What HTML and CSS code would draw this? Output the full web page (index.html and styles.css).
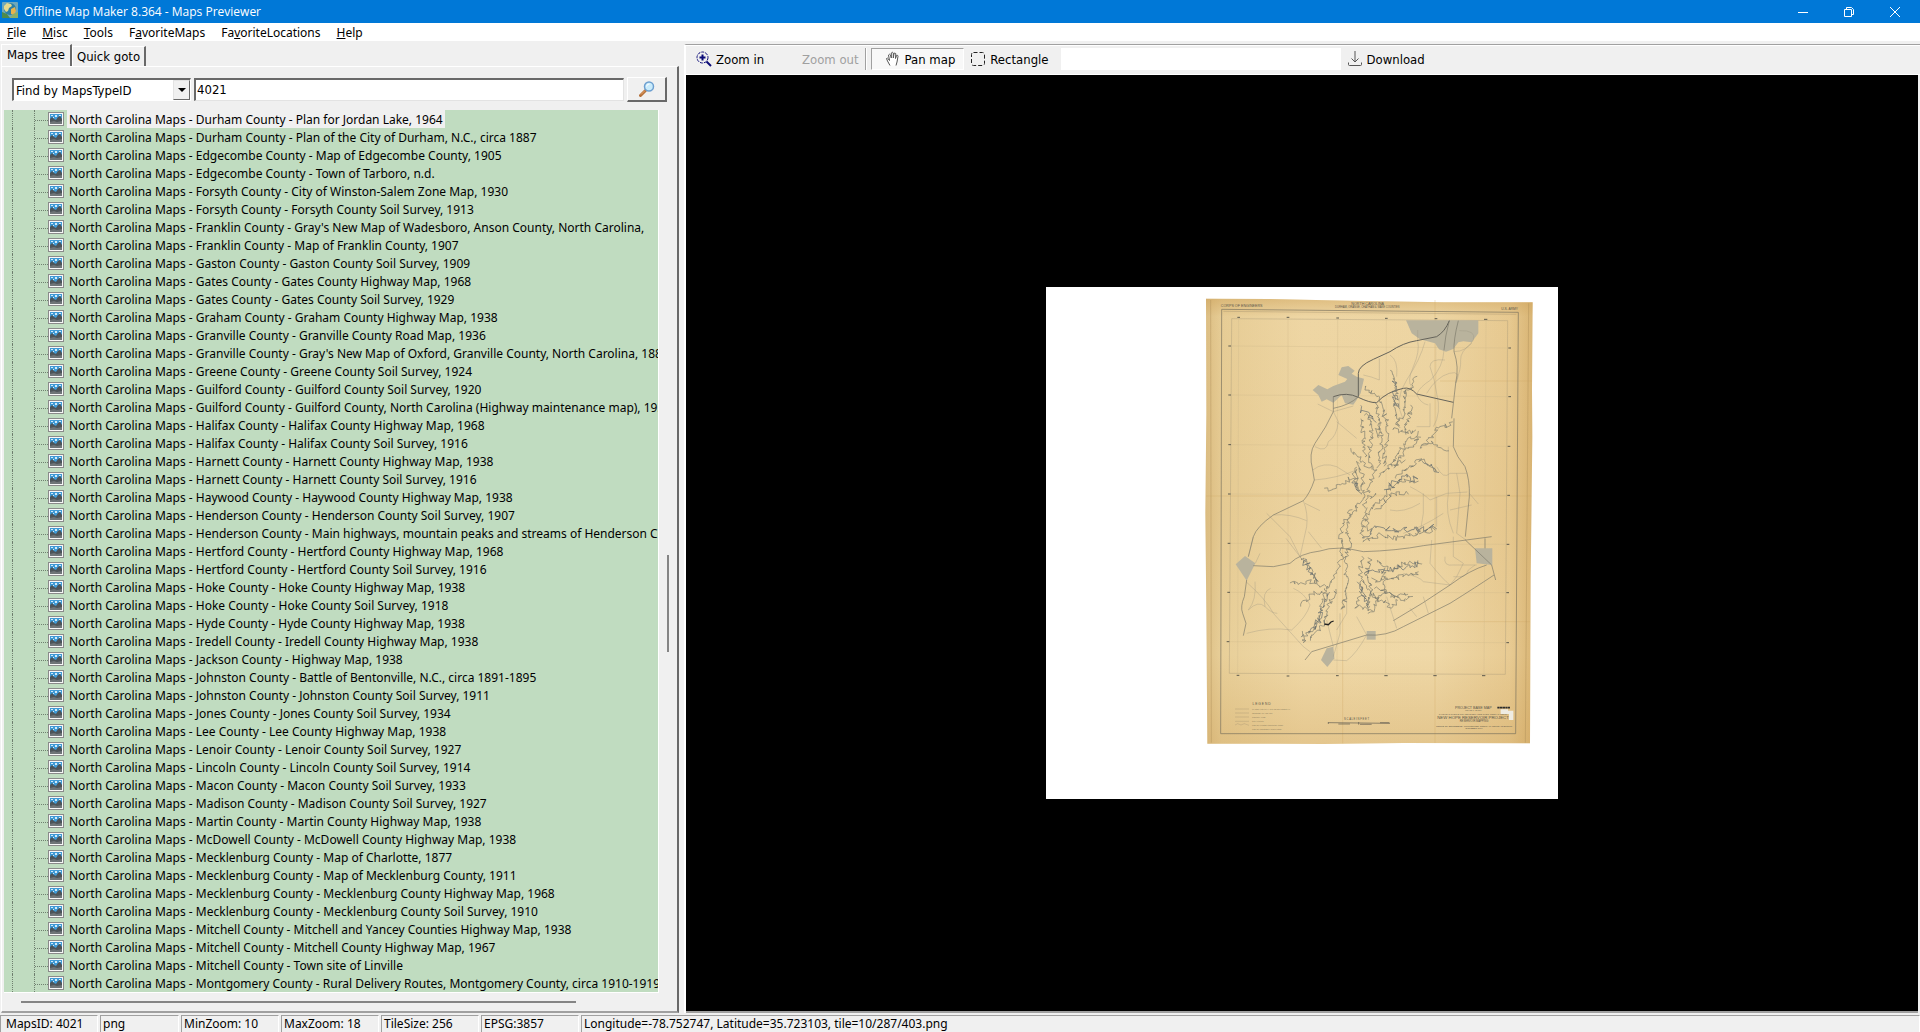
FILE: index.html
```html
<!DOCTYPE html>
<html lang="en">
<head>
    <meta charset="UTF-8">
    <meta name="viewport" content="width=device-width, initial-scale=1.0">
    <title>Offline Map Maker 8.364 - Maps Previewer</title>
    <link rel="stylesheet" href="styles.css">
</head>
<body>
    <svg class="symbols" aria-hidden="true">
        <symbol id="picture" viewBox="0 0 16 14">
            <rect x="0.5" y="0.5" width="15" height="13" fill="#f8f8f8" stroke="#8a8a8a"/>
            <rect x="2" y="2" width="12" height="10" fill="#3f9ad6"/>
            <path d="M3 3h2v1H3zM7 3h2v2H7zM11 3h2v1h-2zM5 5h1v1H5z" fill="#cfeafa"/>
            <path d="M2 12V7l2-2 2 2 2 1 2-3 2-1 2 3v5z" fill="#4c5459"/>
            <path d="M2 12v-2l4-1 3 1 5-1v3z" fill="#6f7578"/>
        </symbol>
    </svg>

    <header class="titlebar">
        <svg class="app-icon" viewBox="0 0 16 16">
            <rect width="16" height="16" rx="1" fill="#6fa8bb"/>
            <circle cx="8" cy="7" r="6" fill="#2c7fa6"/>
            <path d="M2 4l3-3 4 1 1 2-3 2-1 3-2 1-2-3z" fill="#e6d98c"/>
            <path d="M9 7l4-2 1 4-2 4-3-1z" fill="#e9b44c"/>
            <path d="M0 10l5 2 3 4H0z" fill="#4f8a4b"/>
            <path d="M8 16l3-4 5-2v6z" fill="#8bb06a"/>
        </svg>
        <h1>Offline Map Maker 8.364 - Maps Previewer</h1>
        <div class="window-buttons">
            <button aria-label="Minimize"><svg viewBox="0 0 12 12"><path d="M1 6.5h10"/></svg></button>
            <button aria-label="Restore"><svg viewBox="0 0 12 12"><path d="M1.500 3.500h7v7h-7zM3.500 3V1.500h5l2 2v5H9"/></svg></button>
            <button aria-label="Close"><svg viewBox="0 0 12 12"><path d="M1 1l10 10M11 1L1 11"/></svg></button>
        </div>
    </header>

    <nav class="menubar">
        <a href="#"><u>F</u>ile</a>
        <a href="#"><u>M</u>isc</a>
        <a href="#"><u>T</u>ools</a>
        <a href="#">F<u>a</u>voriteMaps</a>
        <a href="#">Fa<u>v</u>oriteLocations</a>
        <a href="#"><u>H</u>elp</a>
    </nav>

    <main class="workspace">
        <section class="sidebar">
            <div class="tabs">
                <button class="tab active">Maps tree</button>
                <button class="tab">Quick goto</button>
            </div>
            <div class="panel">
                <form class="search">
                    <div class="combo">
                        <select aria-label="Search mode">
                            <option>Find by MapsTypeID</option>
                            <option>Find by name</option>
                        </select>
                        <span class="arrow"></span>
                    </div>
                    <input type="text" value="4021" aria-label="Search text">
                    <button type="button" aria-label="Find">
                        <svg viewBox="0 0 16 16">
                            <path d="M1.500 14.500l5-5" stroke="#b5713a" stroke-width="3" stroke-linecap="round"/>
                            <path d="M2 13.500l4-4" stroke="#e9a468"/>
                            <circle cx="10" cy="5.500" r="4.500" fill="#c9ebfb" stroke="#6c9fd0" stroke-width="1.500"/>
                            <path d="M7.500 5.500a3 3 0 0 1 3-2.500" stroke="#fff" fill="none"/>
                        </svg>
                    </button>
                </form>
                <div class="tree-area">
                    <ul class="tree" id="tree"></ul>
                    <div class="scroll-y"><span></span></div>
                    <div class="scroll-x"><span></span></div>
                </div>
            </div>
        </section>

        <section class="viewer">
            <div class="toolbar">
                <button class="tool zoom-in">
                    <svg viewBox="0 0 16 16" fill="none" stroke="#0a0a78">
                        <circle cx="6.500" cy="6.500" r="5.500" stroke-dasharray="3 1"/>
                        <path d="M6.500 3.500v6M3.500 6.500h6" stroke-width="2"/>
                        <path d="M10.500 10.500l4.500 4.500" stroke-width="2"/>
                    </svg>
                    Zoom in
                </button>
                <button class="tool zoom-out" disabled>Zoom out</button>
                <span class="divider"></span>
                <button class="tool pan pressed">
                    <svg viewBox="0 0 16 16" fill="#fff" stroke="#555">
                        <path d="M5 14.500L2.500 10 1.500 7.500q1-1 2 .5l1 1.500-1-5.500q1-1.500 2 0l.8 3V2q1-1.500 2 0v5l.7-4.500q1-1.200 1.800.2L10.500 7.500l1-3q1.500-.8 1.500.8L12 11l-1 3.500"/>
                    </svg>
                    Pan map
                </button>
                <button class="tool rect">
                    <svg viewBox="0 0 16 16" fill="none" stroke="#222">
                        <rect x="1.500" y="1.500" width="13" height="13" rx="2" stroke-dasharray="4 2"/>
                    </svg>
                    Rectangle
                </button>
                <input type="text" aria-label="Selected area">
                <button class="tool download">
                    <svg viewBox="0 0 16 16" fill="none" stroke="#555">
                        <path d="M8 0v11M4.500 7.500L8 11l3.500-3.500M1.500 11.500v2q0 1 1 1h11q1 0 1-1v-2"/>
                    </svg>
                    Download
                </button>
            </div>
            <div class="canvas">
                <svg class="tile" viewBox="-432 21 1536 1536">
                    <defs>
                        <linearGradient id="paper" x1="0" x2="1" y1="0" y2="0">
                            <stop offset="0" stop-color="#ddbf85"/>
                            <stop offset="0.05" stop-color="#e8cf99"/>
                            <stop offset="0.3" stop-color="#f0d9a8"/>
                            <stop offset="0.7" stop-color="#efd8a7"/>
                            <stop offset="0.93" stop-color="#e8cb93"/>
                            <stop offset="1" stop-color="#dab676"/>
                        </linearGradient>
                        <linearGradient id="shade" x1="0" x2="0" y1="0" y2="1">
                            <stop offset="0" stop-color="#c99b50" stop-opacity="0.45"/>
                            <stop offset="0.04" stop-color="#c99b50" stop-opacity="0.05"/>
                            <stop offset="0.48" stop-color="#c99b50" stop-opacity="0.1"/>
                            <stop offset="0.8" stop-color="#c99b50" stop-opacity="0"/>
                            <stop offset="1" stop-color="#c99b50" stop-opacity="0.3"/>
                        </linearGradient>
                    </defs>
                    <rect x="-432" y="21" width="1536" height="1536" fill="#fff"/>
                    <path d="M48 56L240 57 480 62 760 67 1028 67 1026 330 1027 470 1022 900 1020 1390 640 1389 400 1392 250 1391 52 1391 49 1000 46 700 49 400z" fill="url(#paper)"/>
                    <path d="M48 56L240 57 480 62 760 67 1028 67 1026 330 1027 470 1022 900 1020 1390 640 1389 400 1392 250 1391 52 1391 49 1000 46 700 49 400z" fill="url(#shade)"/>
                    <path d="M735 60V1389M48 648H1024M750 303H1026M735 1025H1020M458 800V1390" stroke="#cfa763" stroke-width="3" opacity="0.3"/>
                    <path d="M62 60L64 1388M1016 70L1006 1388" stroke="#a98a55" stroke-width="2" fill="none" opacity="0.6"/>

                    <!-- sheet frame and graticule -->
                    <g fill="none">
                        <path d="M95 88L985 97 977 1361 92 1361z" stroke="#77705c" stroke-width="2"/>
                        <path d="M100 94L979 103" stroke="#98896a"/>
                        <path d="M125 116L953 122 946 1183 118 1180z" stroke="#9c9073" stroke-width="1"/>
                        <path d="M146 118L143 1180M294 118V1180M443 118L441 1180M589 120L587 1182M738 121L735 1182M888 122L882 1182M122 198L952 204M121 345L951 350M120 494L950 499M119 642L949 646M118 790L949 793M118 937L948 938M118 1085L947 1088" stroke="#cdb88c" stroke-width="1"/>
                    </g>
                    <g stroke="#5d5a4e" stroke-width="3">
                        <path d="M142 112h8M290 112h8M439 114h8M585 115h8M734 116h8M882 118h10M140 1186h8M290 1188h8M438 1187h8M583 1187h10M730 1187h10M876 1187h10M115 198h8M115 345h8M115 494h8M114 642h8M113 790h8M112 937h8M110 1085h8M955 204h8M955 350h8M953 499h8M952 646h8M950 793h8M949 938h8M949 1088h8"/>
                    </g>

                    <!-- towns -->
                    <g fill="#b9b39d">
                        <path d="M648 121H865V160L845 187 820 184 805 187 790 207 768 215 747 208 735 190 690 178 665 160z"/>
                        <path d="M455 262L475 258 494 272 485 281 500 290 522 296 512 340 500 360 490 374 465 370 455 345 430 368 410 358 395 365 385 345 368 330 385 315 412 328 430 318 465 305 472 297 445 285z"/>
                        <path d="M137 853L165 828 196 850 170 902z"/>
                        <path d="M855 805H907V855L860 850z"/>
                        <path d="M530 1053h27v26h-27z"/>
                        <path d="M393 1140L410 1105 430 1100 433 1135 412 1161z"/>
                    </g>

                    <!-- minor roads -->
                    <g fill="none" stroke="#99937f" stroke-width="1">
                        <path d="M683 150V182Q690 215 670 260T665 320M705 185Q690 240 650 300T640 420M762 210Q760 260 722 300 690 320 680 342M765 240Q720 235 720 260 735 300 740 340 755 400 730 440M710 340Q740 290 778 280T797 310M792 215Q830 215 850 180 860 150 808 152M845 190Q810 215 812 240T797 310"/>
                        <path d="M568 235V300Q545 290 520 285M600 225Q625 240 620 290M720 370V440H680M715 375Q690 370 680 342M383 372L430 395 490 378M430 395L445 425Q440 470 415 485 410 520 375 500M440 425L500 475M368 570Q400 545 440 560L480 585M373 600Q440 595 500 570"/>
                        <path d="M340 662Q355 700 350 740L330 830M250 705Q300 700 350 722M230 700L300 770 330 830M288 775L330 830M345 670L390 692M355 755L395 805M660 620Q700 640 720 660L770 640 832 636M740 560Q760 600 780 580H832M700 640V700L690 760M740 650V740M775 500V640Q765 700 790 760M780 690L845 675M600 690Q640 700 690 670M640 760Q700 740 760 700M800 580L810 640 800 760 828 780M838 640L865 672"/>
                        <path d="M190 770L175 830M196 850L210 820M168 905Q230 960 250 1000L340 1100 360 1115M195 905Q200 960 175 990M175 990Q205 960 225 980 245 1000 262 1000M170 1060Q240 1040 305 1050 350 1010 360 975 345 940 310 925M225 980Q215 935 242 925"/>
                        <path d="M410 1020L430 1100M450 1000V1060L430 1130M530 1065Q500 1120 470 1142L430 1140M500 1010L530 1065M470 940V1000L440 1050M590 950L620 1045M700 950L715 1000M725 780L720 850Q760 900 780 915M790 770V830L820 850 800 890 780 915M765 830Q760 860 790 855H860M855 855L835 870Q830 895 790 890M640 880Q690 890 700 905L780 915M660 985L680 1010"/>
                    </g>

                    <!-- highways -->
                    <g fill="none" stroke="#7c7969" stroke-width="2">
                        <path d="M778 122Q765 155 740 170L680 182Q640 188 600 215L550 238Q505 258 505 280V350M430 350Q470 335 505 352T560 368Q590 335 640 325 660 320 680 342L790 367" stroke="#66645b" stroke-width="3"/>
                        <path d="M430 350V395M505 350Q480 375 430 385M762 210Q765 170 778 122"/>
                        <path d="M805 122Q790 180 792 215 808 260 797 310L785 415M792 415L790 500Q800 530 825 560 840 600 838 650L826 770"/>
                        <path d="M430 395Q410 440 375 490 355 520 368 570L373 600Q360 640 340 662L250 705Q200 740 190 770L175 830M170 900L163 950Q150 980 158 1000L168 1030 160 1067"/>
                        <path d="M190 857L250 860 300 850Q330 820 390 813 440 795 520 815 620 812 700 797L905 770M885 775V805"/>
                        <path d="M345 1140L365 1115 530 1065Q590 1070 640 1040L780 970Q860 920 912 885M826 780L905 855 917 900M610 1022Q700 970 780 915 840 870 890 855"/>
                    </g>

                    <!-- reservoir shoreline, roughened by the script below -->
                    <g class="shore" fill="none" stroke="#7b7b6e" stroke-width="2" data-rough="6">
                        <path d="M530 400Q550 440 540 500T555 570L530 640 500 680"/>
                        <path d="M520 410Q515 480 525 530"/>
                        <path d="M480 510L545 570"/>
                        <path d="M505 545L520 600 515 645"/>
                        <path d="M410 632L490 590 495 560"/>
                        <path d="M495 570L505 640"/>
                        <path d="M520 320Q540 340 555 340L575 385 595 440 590 500 580 560"/>
                        <path d="M560 370L565 430 560 470"/>
                        <path d="M605 270L620 330 615 400 625 440"/>
                        <path d="M645 330L640 400 620 440"/>
                        <path d="M680 290L655 330 645 350"/>
                        <path d="M665 380L650 430 640 460"/>
                        <path d="M610 440L640 460 680 455"/>
                        <path d="M680 460L620 520 600 560"/>
                        <path d="M690 470L640 520 610 570"/>
                        <path d="M790 430L740 450 700 500"/>
                        <path d="M770 510L720 485 690 510"/>
                        <path d="M740 570L690 540 650 570 610 590"/>
                        <path d="M680 610L630 600 590 640 550 680"/>
                        <path d="M650 640L610 640 560 690"/>
                        <path d="M500 680L465 720 450 780 455 830 440 880 410 930"/>
                        <path d="M480 690L470 740 480 800 465 840 470 900 460 990"/>
                        <path d="M530 690L520 730 515 770"/>
                        <path d="M545 680L530 720 540 760"/>
                        <path d="M520 780L570 765 620 775 700 760 740 745"/>
                        <path d="M520 830L510 880 515 930 500 980 550 990"/>
                        <path d="M540 830L530 880 545 930 530 980"/>
                        <path d="M560 840L600 870 640 850 700 845"/>
                        <path d="M550 900L620 895 690 875"/>
                        <path d="M560 920L620 950 660 940"/>
                        <path d="M540 940L600 980 625 960"/>
                        <path d="M520 900L560 960 540 1000"/>
                        <path d="M330 830L365 870 385 910 410 930"/>
                        <path d="M305 910L365 905 385 910"/>
                        <path d="M330 975L370 940 410 940"/>
                        <path d="M410 930L395 980 385 1030 345 1075"/>
                        <path d="M440 930L415 980 400 1030 360 1080"/>
                        <path d="M330 1055L350 1095"/>
                        <path d="M570 430L575 500 565 560"/>
                        <path d="M565 590L600 560 640 540"/>
                        <path d="M560 640L530 660 520 690"/>
                        <path d="M580 870L590 930 560 960"/>
                        <path d="M600 950L640 960 665 940"/>
                    </g>
                    <g class="shore" fill="none" stroke="#646b6c" stroke-width="2" data-rough="8">
                        <path d="M510 385L540 400 550 430"/>
                        <path d="M520 770L560 740 600 750 640 745 680 750 740 740"/>
                        <path d="M530 880L600 870 690 850"/>
                        <path d="M510 910L545 990"/>
                        <path d="M340 835L380 900"/>
                        <path d="M410 940L390 1010 360 1060"/>
                        <path d="M610 300L620 390"/>
                        <path d="M590 630L640 590 680 600"/>
                        <path d="M490 600L510 640"/>
                        <path d="M700 550L740 575"/>
                    </g>
                    <path d="M403 1032l12 2 8-8 8-3" stroke="#222" stroke-width="4" fill="none"/>

                    <!-- lettering -->
                    <g class="map-text">
                        <text x="155" y="81" font-size="11">CORPS OF ENGINEERS</text>
                        <text x="533" y="74" font-size="11">NORTH CAROLINA</text>
                        <text x="532" y="84" font-size="8">DURHAM, ORANGE, CHATHAM &amp; WAKE COUNTIES</text>
                        <text x="959" y="91" font-size="10">U.S. ARMY</text>
                        <text x="215" y="1274" font-size="10">L E G E N D</text>
                        <text x="850" y="1286" font-size="11">PROJECT BASE MAP</text>
                        <text x="850" y="1294" font-size="6">SCALE 1 : 80,000</text>
                        <text x="850" y="1305" font-size="6">CAPE FEAR RIVER BASIN ABOVE NEW HOPE RIVER, NORTH CAROLINA</text>
                        <text x="849" y="1317" font-size="13">NEW HOPE RESERVOIR PROJECT</text>
                        <text x="852" y="1325" font-size="8">RESERVOIR MAPPING</text>
                        <text x="852" y="1340" font-size="7">CORPS OF ENGINEERS, WILMINGTON, NORTH CAROLINA DISTRICT</text>
                        <text x="852" y="1348" font-size="7">OCTOBER 1964</text>
                        <text x="500" y="1321" font-size="8">S C A L E   I N   F E E T</text>
                    </g>
                    <g class="map-text legend-text" font-size="6">
                        <text x="186" y="1290">MAJOR HIGHWAY (STATE OR FEDERAL)</text>
                        <text x="186" y="1302">SECONDARY ROADS</text>
                        <text x="186" y="1314">COUNTY LINE</text>
                        <text x="186" y="1326">CITY LIMITS</text>
                        <text x="186" y="1337">TOP OF FLOOD CONTROL POOL</text>
                        <text x="186" y="1350">TOP OF CONSERVATION POOL</text>
                    </g>
                    <path d="M135 1287h42M135 1299h42M135 1311h42M135 1324h42M135 1335l8-4 10 4 10-4 14 5" stroke="#9d8f6f" stroke-width="1" fill="none"/>
                    <path d="M415 1328L600 1330M415 1326v6M445 1332h35M510 1333h35M570 1328h28M506 1326v8" stroke="#5f5b50" stroke-width="2"/>
                    <path d="M932 1288h22v4h16v28h-13v-18h-25z" fill="#efece2"/>
                    <path d="M922 1283h38" stroke="#2d2d2d" stroke-width="5" stroke-dasharray="7 1"/>
                </svg>
            </div>
        </section>
    </main>

    <footer class="statusbar">
        <span class="cell">MapsID: 4021</span>
        <span class="cell">png</span>
        <span class="cell">MinZoom: 10</span>
        <span class="cell">MaxZoom: 18</span>
        <span class="cell">TileSize: 256</span>
        <span class="cell">EPSG:3857</span>
        <span class="cell">Longitude=-78.752747, Latitude=35.723103, tile=10/287/403.png</span>
    </footer>

    <script>
        const maps = [
            "Durham County - Plan for Jordan Lake, 1964",
            "Durham County - Plan of the City of Durham, N.C., circa 1887",
            "Edgecombe County - Map of Edgecombe County, 1905",
            "Edgecombe County - Town of Tarboro, n.d.",
            "Forsyth County - City of Winston-Salem Zone Map, 1930",
            "Forsyth County - Forsyth County Soil Survey, 1913",
            "Franklin County - Gray's New Map of Wadesboro, Anson County, North Carolina,",
            "Franklin County - Map of Franklin County, 1907",
            "Gaston County - Gaston County Soil Survey, 1909",
            "Gates County - Gates County Highway Map, 1968",
            "Gates County - Gates County Soil Survey, 1929",
            "Graham County - Graham County Highway Map, 1938",
            "Granville County - Granville County Road Map, 1936",
            "Granville County - Gray's New Map of Oxford, Granville County, North Carolina, 1882",
            "Greene County - Greene County Soil Survey, 1924",
            "Guilford County - Guilford County Soil Survey, 1920",
            "Guilford County - Guilford County, North Carolina (Highway maintenance map), 1930",
            "Halifax County - Halifax County Highway Map, 1968",
            "Halifax County - Halifax County Soil Survey, 1916",
            "Harnett County - Harnett County Highway Map, 1938",
            "Harnett County - Harnett County Soil Survey, 1916",
            "Haywood County - Haywood County Highway Map, 1938",
            "Henderson County - Henderson County Soil Survey, 1907",
            "Henderson County - Main highways, mountain peaks and streams of Henderson County",
            "Hertford County - Hertford County Highway Map, 1968",
            "Hertford County - Hertford County Soil Survey, 1916",
            "Hoke County - Hoke County Highway Map, 1938",
            "Hoke County - Hoke County Soil Survey, 1918",
            "Hyde County - Hyde County Highway Map, 1938",
            "Iredell County - Iredell County Highway Map, 1938",
            "Jackson County - Highway Map, 1938",
            "Johnston County - Battle of Bentonville, N.C., circa 1891-1895",
            "Johnston County - Johnston County Soil Survey, 1911",
            "Jones County - Jones County Soil Survey, 1934",
            "Lee County - Lee County Highway Map, 1938",
            "Lenoir County - Lenoir County Soil Survey, 1927",
            "Lincoln County - Lincoln County Soil Survey, 1914",
            "Macon County - Macon County Soil Survey, 1933",
            "Madison County - Madison County Soil Survey, 1927",
            "Martin County - Martin County Highway Map, 1938",
            "McDowell County - McDowell County Highway Map, 1938",
            "Mecklenburg County - Map of Charlotte, 1877",
            "Mecklenburg County - Map of Mecklenburg County, 1911",
            "Mecklenburg County - Mecklenburg County Highway Map, 1968",
            "Mecklenburg County - Mecklenburg County Soil Survey, 1910",
            "Mitchell County - Mitchell and Yancey Counties Highway Map, 1938",
            "Mitchell County - Mitchell County Highway Map, 1967",
            "Mitchell County - Town site of Linville",
            "Montgomery County - Rural Delivery Routes, Montgomery County, circa 1910-1919"
        ];

        const tree = document.getElementById('tree');
        maps.forEach((name, i) => {
            const li = document.createElement('li');
            if (i === 0) li.className = 'selected';
            li.innerHTML = `
                <span class="branch"></span>
                <svg class="pic"><use href="#picture"></use></svg>
                <span class="label">North Carolina Maps - ${name}</span>
            `;
            tree.appendChild(li);
        });

        // turn the smooth shoreline paths into jagged inlets
        let seed = 7;
        function random() {
            seed = (seed * 16807) % 2147483647;
            return seed / 2147483647;
        }
        document.querySelectorAll('.shore').forEach(group => {
            const rough = Number(group.dataset.rough);
            group.querySelectorAll('path').forEach(path => {
                const points = [];
                const length = path.getTotalLength();
                for (let d = 0; d < length; d += 5) {
                    const p = path.getPointAtLength(d);
                    const x = p.x + (random() - 0.5) * rough * 2.5;
                    const y = p.y + (random() - 0.5) * rough * 2.5;
                    points.push(x.toFixed(1) + ' ' + y.toFixed(1));
                }
                path.setAttribute('d', 'M' + points.join('L'));
            });
        });
    </script>
</body>
</html>
```

FILE: styles.css
```css
* {
    box-sizing: border-box;
}
body, html {
    height: 100%;
    margin: 0;
    padding: 0;
}
body {
    display: flex;
    flex-direction: column;
    background-color: #f0f0f0;
    color: #000;
    font-family: "DejaVu Sans Condensed", "Noto Sans", sans-serif;
    font-size: 13px;
    overflow: hidden;
}
button, input, select {
    font: inherit;
    color: inherit;
    border-radius: 0;
    margin: 0;
}
.symbols {
    display: none;
}

/* title bar */
.titlebar {
    display: flex;
    align-items: center;
    height: 23px;
    padding: 0 2px 3px 2px;
    background-color: #0078d7;
    color: #fff;
    font-family: "Open Sans", sans-serif;
}
.app-icon {
    width: 16px;
    height: 16px;
}
.titlebar h1 {
    flex: 1;
    margin: 2px 0 0 6px;
    font-size: 12px;
    font-weight: normal;
}
.window-buttons {
    display: flex;
}
.window-buttons button {
    width: 46px;
    height: 20px;
    padding: 0;
    border: none;
    background: none;
}
.window-buttons svg {
    width: 12px;
    height: 12px;
    fill: none;
    stroke: #fff;
    vertical-align: middle;
}

/* menu */
.menubar {
    display: flex;
    gap: 16px;
    height: 18px;
    padding-left: 7px;
    background-color: #fff;
    font-family: "Noto Sans", sans-serif;
    font-size: 12px;
    line-height: 19px;
}
.menubar a {
    color: #000;
    text-decoration: none;
}

.workspace {
    display: flex;
    flex: 1;
    gap: 5px;
    min-height: 0;
    padding-top: 3px;
}

/* left side */
.sidebar {
    display: flex;
    flex-direction: column;
    width: 679px;
    padding-left: 1px;
}
.tabs {
    display: flex;
    align-items: flex-end;
    height: 22px;
}
.tab {
    height: 20px;
    padding: 0 4px;
    border: 1px solid #fff;
    border-right: 2px solid #696969;
    border-bottom: none;
    background-color: #f0f0f0;
}
.tab.active {
    height: 22px;
    padding: 0 5px 2px;
}
.panel {
    display: flex;
    flex-direction: column;
    flex: 1;
    min-height: 0;
    border-top: 1px solid #fff;
    border-left: 1px solid #fff;
    border-right: 2px solid #696969;
    border-bottom: 2px solid #a0a0a0;
}
.search {
    display: flex;
    align-items: center;
    gap: 3px;
    padding: 10px 10px 8px 10px;
}
.combo {
    display: grid;
    width: 179px;
    height: 23px;
    border: 1px solid;
    border-width: 2px 1px 1px 2px;
    border-color: #696969 #fff #fff #696969;
    background-color: #fff;
}
.combo select {
    grid-area: 1 / 1;
    padding: 0 2px;
    border: none;
    background: none;
    appearance: none;
}
.combo .arrow {
    grid-area: 1 / 1;
    justify-self: end;
    display: flex;
    align-items: center;
    justify-content: center;
    width: 17px;
    background-color: #f0f0f0;
    border: 1px solid;
    border-color: #e3e3e3 #696969 #696969 #e3e3e3;
    pointer-events: none;
}
.combo .arrow::after {
    content: "";
    border: 4px solid transparent;
    border-top-color: #000;
    border-bottom: none;
}
.search input {
    flex: 1;
    height: 23px;
    padding: 0 1px 2px;
    border: 1px solid;
    border-width: 2px 1px 1px 2px;
    border-color: #696969 #e3e3e3 #e3e3e3 #696969;
    background-color: #fff;
}
.search button {
    width: 40px;
    height: 25px;
    padding: 0;
    border: 1px solid;
    border-width: 1px 2px 2px 1px;
    border-color: #fff #696969 #696969 #fff;
    background-color: #f0f0f0;
}
.search svg {
    width: 16px;
    height: 16px;
    vertical-align: middle;
}

/* maps tree */
.tree-area {
    display: grid;
    grid-template-columns: 1fr 18px;
    grid-template-rows: 1fr 18px;
    flex: 1;
    min-height: 0;
    padding-left: 2px;
}
.tree {
    margin: 0;
    padding: 0 0 0 8px;
    overflow: hidden;
    list-style: none;
    background-color: #c0dcc0;
    border-right: 1px solid #fff;
    border-bottom: 1px solid #fff;
    font-family: "Noto Sans", sans-serif;
    font-size: 12px;
}
.tree li {
    display: flex;
    align-items: center;
    height: 18px;
    padding-left: 21px;
    border-left: 1px dotted #6f7f6f;
    white-space: nowrap;
}
.branch {
    align-self: stretch;
    flex: none;
    width: 14px;
    height: 18px;
    border-left: 1px dotted #6f7f6f;
    padding-top: 10px;
}
.branch::after {
    content: "";
    display: block;
    border-top: 1px dotted #6f7f6f;
}
.pic {
    flex: none;
    width: 16px;
    height: 14px;
    margin-right: 3px;
}
.label {
    height: 18px;
    padding: 0 2px;
    line-height: 19px;
}
.selected .label {
    background-color: #f0f0f0;
}
.scroll-y {
    display: flex;
    flex-direction: column;
    align-items: center;
}
.scroll-y span {
    width: 2px;
    height: 11%;
    margin-top: 445px;
    background-color: #858585;
}
.scroll-x {
    display: flex;
    align-items: center;
    padding-left: 17px;
}
.scroll-x span {
    width: 87%;
    height: 2px;
    background-color: #858585;
}

/* right side */
.viewer {
    display: flex;
    flex-direction: column;
    flex: 1;
    min-width: 0;
    border-top: 1px solid #a0a0a0;
    border-left: 2px solid #fff;
}
.toolbar {
    display: flex;
    align-items: center;
    height: 30px;
    padding: 0 0 2px 4px;
    border-top: 1px solid #fff;
    border-bottom: 1px solid #fff;
}
.tool {
    display: flex;
    align-items: center;
    gap: 4px;
    height: 22px;
    padding: 0 6px;
    border: none;
    background: none;
}
.tool svg {
    width: 16px;
    height: 16px;
}
.zoom-in {
    width: 106px;
}
.zoom-out {
    color: #a0a0a0;
}
.divider {
    width: 2px;
    height: 22px;
    margin-right: 4px;
    border-left: 1px solid #a0a0a0;
    border-right: 1px solid #fff;
}
.pan {
    padding: 0 8px 0 13px;
}
.pressed {
    background-color: #f8f8f8;
    border: 1px solid;
    border-color: #a0a0a0 #fff #fff #a0a0a0;
}
.rect {
    padding-right: 12px;
}
.toolbar input {
    width: 280px;
    height: 22px;
    border: none;
    background-color: #fff;
}
.canvas {
    display: flex;
    align-items: center;
    justify-content: center;
    flex: 1;
    min-height: 0;
    margin-right: 2px;
    background-color: #000;
    border-bottom: 2px solid #a0a0a0;
}
.tile {
    width: 512px;
    height: 512px;
}
.map-text {
    font-family: "Liberation Sans", sans-serif;
    fill: #5c574a;
    text-anchor: middle;
}
.legend-text {
    fill: #8d8060;
    text-anchor: start;
}

/* status bar */
.statusbar {
    display: flex;
    gap: 2px;
    height: 19px;
    padding-top: 2px;
    font-family: "Noto Sans", sans-serif;
    font-size: 12px;
}
.cell {
    width: 98px;
    padding-left: 2px;
    border-top: 1px solid #a0a0a0;
    border-left: 1px solid #a0a0a0;
    border-right: 1px solid #fff;
    line-height: 16px;
    white-space: nowrap;
}
.cell:first-child {
    padding-left: 5px;
}
.cell:nth-child(2) {
    width: 79px;
}
.cell:last-child {
    flex: 1;
}
```
